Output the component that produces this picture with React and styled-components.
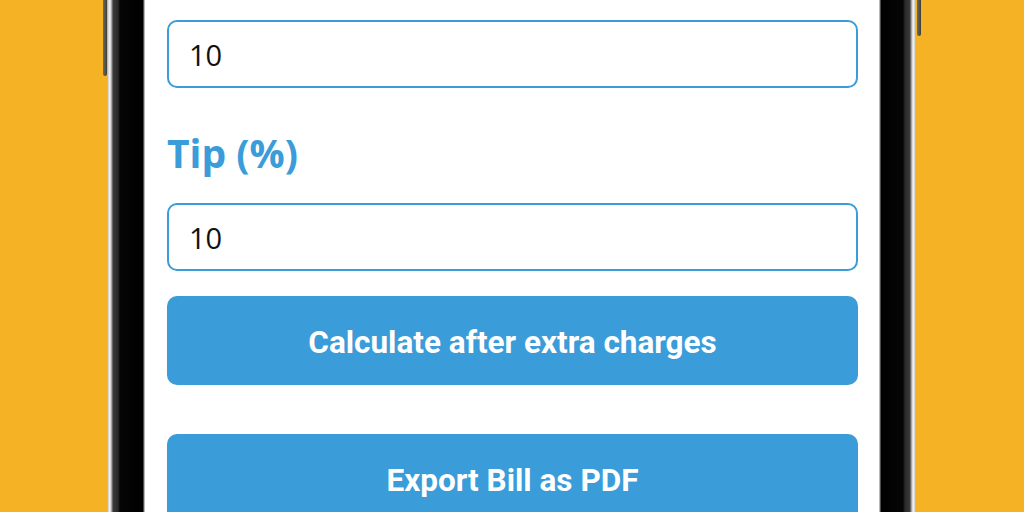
import React from "react";
import styled, { createGlobalStyle } from "styled-components";

const Global = createGlobalStyle`
  html, body { margin: 0; padding: 0; }
  body { width: 1024px; height: 512px; overflow: hidden; background: #f5b224; }
  #root { height: 512px; }
`;

const BLUE = "#3a9cd8";

const Page = styled.div`
  width: 1024px;
  height: 512px;
  background: #f5b224;
  display: flex;
  justify-content: flex-start;
  padding-left: 107px;
  box-sizing: border-box;
  overflow: hidden;
`;

const Phone = styled.div`
  position: relative;
  display: flex;
  height: 512px;
  width: 809px;
`;

const Bezel = styled.div`
  width: ${(p) => p.$w}px;
  height: 100%;
  flex: none;
  background: linear-gradient(
    ${(p) => (p.$side === "left" ? "to right" : "to left")},
    #a9a9a9 0px,
    #e8e8e8 2px,
    #f4f4f4 3px,
    #8d8d8d 5px,
    #3a3a3a 6px,
    #2a2a2a 11px,
    #050505 13px,
    #000 ${(p) => p.$w - 2}px,
    #9a9a9a ${(p) => p.$w - 1}px,
    #d8d8d8 ${(p) => p.$w}px
  );
`;

const SideButton = styled.div`
  position: absolute;
  top: 0;
  width: 4px;
  height: ${(p) => p.$h}px;
  ${(p) => (p.$side === "left" ? "left: -4px;" : "right: -5px;")}
  background: linear-gradient(to right, #6f6e62, #3d3d36);
  border-radius: 0 0 2px 2px;
`;

const Screen = styled.div`
  flex: 1;
  background: #ffffff;
  padding: 20px 21px 0 22px;
  display: flex;
  flex-direction: column;
  box-sizing: border-box;
  overflow: hidden;
`;

const Input = styled.div`
  flex: none;
  height: 68px;
  box-sizing: border-box;
  border: 2px solid ${BLUE};
  border-radius: 10px;
  display: flex;
  align-items: center;
  padding-left: 20px;
  font-family: "Open Sans", "Noto Sans", sans-serif;
  font-size: 29px;
  color: #111;
  background: #fff;
`;

const Label = styled.div`
  flex: none;
  margin-top: 38px;
  margin-bottom: 23px;
  font-family: "Open Sans", "Noto Sans", sans-serif;
  font-weight: 700;
  font-size: 39px;
  line-height: 54px;
  color: ${BLUE};
`;

const Button = styled.div`
  height: 89px;
  box-sizing: border-box;
  padding-top: 4px;
  flex: none;
  margin-top: ${(p) => p.$gap}px;
  border-radius: 10px;
  background: ${BLUE};
  color: #fff;
  display: flex;
  align-items: center;
  justify-content: center;
  font-family: Roboto, "Noto Sans", sans-serif;
  font-weight: 700;
  font-size: 31.5px;
`;

export default function App() {
  return (
    <>
      <Global />
      <Page>
        <Phone>
          <SideButton $side="left" $h={76} />
          <Bezel $side="left" $w={38} />
          <Screen>
            <Input>10</Input>
            <Label>Tip (%)</Label>
            <Input>10</Input>
            <Button $gap={25}>Calculate after extra charges</Button>
            <Button $gap={49}>Export Bill as PDF</Button>
          </Screen>
          <Bezel $side="right" $w={37} />
          <SideButton $side="right" $h={36} />
        </Phone>
      </Page>
    </>
  );
}
